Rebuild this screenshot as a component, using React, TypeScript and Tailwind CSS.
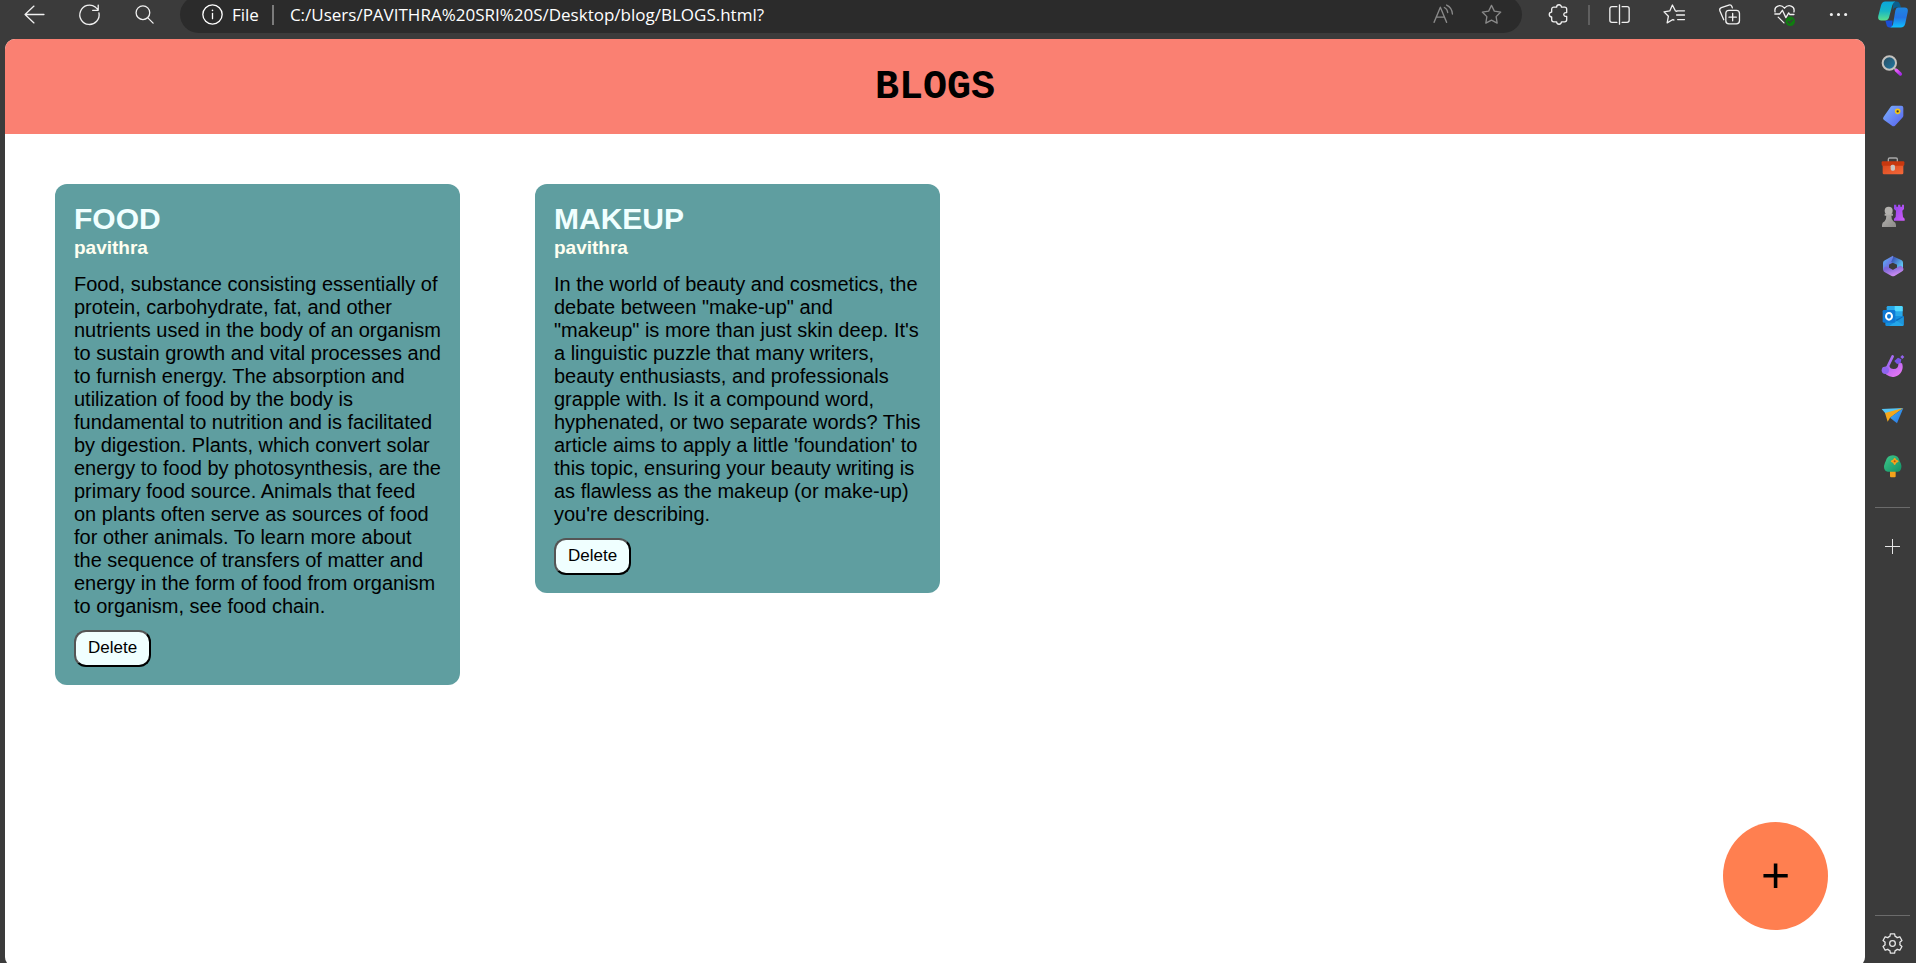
import type { ReactNode } from "react";

type Post = { title: string; author: string; body: string };

const posts: Post[] = [
  {
    title: "FOOD",
    author: "pavithra",
    body: "Food, substance consisting essentially of protein, carbohydrate, fat, and other nutrients used in the body of an organism to sustain growth and vital processes and to furnish energy. The absorption and utilization of food by the body is fundamental to nutrition and is facilitated by digestion. Plants, which convert solar energy to food by photosynthesis, are the primary food source. Animals that feed on plants often serve as sources of food for other animals. To learn more about the sequence of transfers of matter and energy in the form of food from organism to organism, see food chain.",
  },
  {
    title: "MAKEUP",
    author: "pavithra",
    body: "In the world of beauty and cosmetics, the debate between \"make-up\" and \"makeup\" is more than just skin deep. It's a linguistic puzzle that many writers, beauty enthusiasts, and professionals grapple with. Is it a compound word, hyphenated, or two separate words? This article aims to apply a little 'foundation' to this topic, ensuring your beauty writing is as flawless as the makeup (or make-up) you're describing.",
  },
];

// Thin outline icon on a 20-unit grid
function Line({ children }: { children: ReactNode }) {
  return (
    <svg
      viewBox="0 0 20 20"
      className="size-[21px] overflow-visible"
      fill="none"
      stroke="currentColor"
      strokeWidth="1.25"
      strokeLinecap="round"
      strokeLinejoin="round"
      aria-hidden="true"
    >
      {children}
    </svg>
  );
}

function ToolButton({ label, wide = "w-[55px]", children }: { label: string; wide?: string; children: ReactNode }) {
  return (
    <button type="button" aria-label={label} className={`${wide} flex h-7 shrink-0 items-center justify-center`}>
      {children}
    </button>
  );
}

const starPath =
  "M10 1.3 12.7 6.8 18.8 7.7 14.4 12 15.4 18.2 10 15.3 4.6 18.2 5.6 12 1.2 7.7 7.3 6.8Z";

function Toolbar() {
  return (
    <header className="flex h-[39px] shrink-0 items-center pb-[10px] pl-[7px] text-[#f0f0f0]">
      <ToolButton label="Back">
        <Line>
          <path d="M19 10H1M9.5 2 1 10l8.500 8" />
        </Line>
      </ToolButton>
      <ToolButton label="Refresh">
        <Line>
          <path d="M19 8.500A9.200 9.200 0 1 1 15.800 3.200L18.300 5.500M18.300 1v5h-5.300" />
        </Line>
      </ToolButton>
      <ToolButton label="Search">
        <Line>
          <circle cx="8.500" cy="8.300" r="6.500" />
          <path d="m13.200 13.200 5 5" />
        </Line>
      </ToolButton>
      <div className="ml-[8px] flex h-[37px] min-w-0 flex-1 items-center rounded-full bg-[#2b2b2b] pr-[7px] pl-[22px] font-['Open_Sans',sans-serif] text-[17px] leading-6 text-white">
        <Line>
          <circle cx="10" cy="10" r="9.200" />
          <path d="M10 9v5" />
          <path d="M10 6v.2" strokeWidth="1.500" />
        </Line>
        <span className="ml-[9px]">File</span>
        <span className="ml-[13px] h-5 w-[2px] bg-[#7b7b7b]" />
        <input
          aria-label="Address"
          defaultValue="C:/Users/PAVITHRA%20SRI%20S/Desktop/blog/BLOGS.html?"
          className="ml-[16px] min-w-0 flex-1 bg-transparent outline-none"
        />
        <div className="flex text-[#8a8a8a]">
          <ToolButton label="Read aloud" wide="w-12">
            <Line>
              <path d="M1 17.500 7 3l6 14.500M3.200 12.500h7.600M10.800 3.300c1.800.9 3 2.600 3.200 4.800M13 1c3.200 1.500 5.300 4.800 5.500 8.500" />
            </Line>
          </ToolButton>
          <ToolButton label="Add to favorites" wide="w-12">
            <Line>
              <path d={starPath} />
            </Line>
          </ToolButton>
        </div>
      </div>
      <div className="ml-[9px] flex items-center">
        <ToolButton label="Extensions">
          <Line>
            <path d="M5.500 3h2.700a2.300 2.300 0 0 1 4.600 0h3a2 2 0 0 1 2 2v3.200c-3.700-.6-3.700 4.200 0 3.600V15a2 2 0 0 1-2 2h-3a2.300 2.300 0 0 1-4.600 0H5.500a2 2 0 0 1-2-2v-2.700a2.300 2.300 0 0 1 0-4.600V5a2 2 0 0 1 2-2Z" />
          </Line>
        </ToolButton>
        <span className="mx-[2px] h-5 w-[2px] bg-[#5f5f5f]" />
        <ToolButton label="Split screen">
          <Line>
            <path d="M7.500 2.500H2.800a2 2 0 0 0-2 2v11a2 2 0 0 0 2 2h4.700M12.500 2.500h4.700a2 2 0 0 1 2 2v11a2 2 0 0 1-2 2h-4.700M10 .8v18.400" />
          </Line>
        </ToolButton>
        <ToolButton label="Favorites">
          <Line>
            <path d="M12.300 7 10.800 6.500 8 1 5.500 6.600 0 7.500 4.200 11.600 3 18l5.500-3.200 1 .5M12.500 6.500H19.500M12 10.500h7.500M13 14.800h6.500" />
          </Line>
        </ToolButton>
        <ToolButton label="Collections">
          <Line>
            <path d="M4.500 15 .9 6.700C.4 5.200.9 4 2.200 3.500L9.400 1c1.300-.4 2.400.1 2.900 1.400l.4 1.300" />
            <rect x="6.500" y="6" width="13" height="13" rx="3" />
            <path d="M13 9v7M9.500 12.500h7" />
          </Line>
        </ToolButton>
        <ToolButton label="Browser essentials">
          <Line>
            <path d="M1 7.500C-.2 1.500 6.500-.2 10 4c3.500-4.200 10.200-2.500 9 3.500M.8 9.500h4.700L8 6l3.300 7L14 8.500l1 1.500h4M4 12.500l5.500 5.500" />
            <circle cx="15.500" cy="16.500" r="4.500" fill="#107c10" stroke="none" />
            <path d="m13.500 16.600 1.300 1.400 2.700-2.800" stroke="#3b3b3b" />
          </Line>
        </ToolButton>
        <ToolButton label="More" wide="w-[53px]">
          <Line>
            <path d="M3.200 10h.01M10 10h.01M16.800 10h.01" strokeWidth="3" />
          </Line>
        </ToolButton>
      </div>
    </header>
  );
}

// Sidebar drawings share a 72-unit grid
const sideIcons: { label: string; art: ReactNode }[] = [
  {
    label: "Search",
    art: (
      <>
        <path d="m38 41 7 7" stroke="#9a9a9a" strokeWidth="6" />
        <path d="m46 49 12 11" stroke="url(#magenta)" strokeWidth="10" strokeLinecap="round" />
        <circle cx="25" cy="27" r="20" fill="url(#lens)" stroke="#c4c2bf" strokeWidth="6" />
      </>
    ),
  },
  {
    label: "Shopping",
    art: (
      <>
        <path d="M35 5h26q6 0 6 6v24q0 3-3 6L42 65q-5 4-9 0L8 47q-4-4 0-9L29 8q2-3 6-3Z" fill="url(#tag)" />
        <circle cx="50" cy="22" r="6" fill="#3b3b3b" stroke="#f5c518" strokeWidth="5" />
      </>
    ),
  },
  {
    label: "Tools",
    art: (
      <>
        <path d="M22 24v-8q0-4 4-4h19q4 0 4 4v8" fill="none" stroke="#a8a8a8" strokeWidth="4" />
        <rect x="5" y="30" width="62" height="31" rx="4" fill="url(#box)" />
        <rect x="2" y="22" width="68" height="13" rx="3" fill="#c8380f" />
        <rect x="29" y="32" width="13" height="18" rx="5" fill="#c9c5c2" />
      </>
    ),
  },
  {
    label: "Games",
    art: (
      <>
        <path d="M39 2h7v6h5V2h7v6h5V2h6v13l-5 5 2 19 5 5v6H39v-6l5-5 1-19-6-5Z" fill="url(#rook)" />
        <path d="M11 29h25v6h-5q0 12 6 17 8 3 8 11v6H3v-6q0-8 8-11 5-5 5-17h-5Z" fill="url(#pawn)" />
        <circle cx="23" cy="20" r="12" fill="#b3b1ae" />
      </>
    ),
  },
  {
    label: "Microsoft 365",
    art: (
      <g fill="none" strokeWidth="18" strokeLinejoin="round">
        <path d="M40 13 15 27v20" stroke="url(#violet)" />
        <path d="M34 16 57 26v22" stroke="url(#sky)" />
        <path d="M58 45 36 58 16 47" stroke="url(#indigo)" strokeLinecap="round" />
      </g>
    ),
  },
  {
    label: "Outlook",
    art: (
      <>
        <rect x="17" y="6" width="48" height="38" rx="4" fill="#28a8ea" />
        <path d="M41 6h20q4 0 4 4v12H41Z" fill="#50d9ff" />
        <path d="M13 36h55v26q0 4-4 4H17q-4 0-4-4Z" fill="#1490df" />
        <path d="M68 36v28L43 48Z" fill="#0a6cbd" />
        <path d="M24 66 68 38v24q0 4-4 4Z" fill="#32b8f0" opacity=".55" />
        <rect x="5" y="18" width="38" height="38" rx="4" fill="#0f78d4" />
        <ellipse cx="24" cy="37" rx="9" ry="10" fill="none" stroke="#fff" strokeWidth="6" />
      </>
    ),
  },
  {
    label: "Designer",
    art: (
      <>
        <path d="M5 40A30 30 0 1 0 63 28L52 26Q54 44 38 45 27 45 25 36Z" fill="url(#drop)" />
        <path d="M35 7 18 42" stroke="#a86cf4" strokeWidth="8" strokeLinecap="round" />
        <circle cx="13" cy="49" r="11" fill="#8f65ef" />
        <path d="m51 11 10 5-2 11-11 3-8-9Z" fill="#7754e8" />
        <path d="m64 3 6 6-6 6-6-6Z" fill="#9363ee" />
      </>
    ),
  },
  {
    label: "Drop",
    art: (
      <>
        <path d="M2 15 67 12 18 34Z" fill="#55c5f5" />
        <path d="M12 27 67 12 27 41l-7 12Z" fill="#f5a81c" />
        <path d="M67 12 48 58 27 41Z" fill="url(#plane)" />
      </>
    ),
  },
  {
    label: "Tree",
    art: (
      <>
        <path d="M27 48h17v19q0 3-3 3H30q-3 0-3-3Z" fill="#f2a21b" />
        <path d="M36 4q17 0 20 18 8 12 4 23-2 8-9 8H20q-7 0-10-8-3-9 4-23Q18 4 36 4Z" fill="url(#leaf)" />
        <path d="m41 14 3 5 6 3-6 3-3 5-3-5-6-3 6-3Z" fill="#f6a21a" stroke="#f6a21a" strokeWidth="5" strokeLinejoin="round" />
        <circle cx="41" cy="22" r="3" fill="#b15312" />
      </>
    ),
  },
];

function Gradient({ id, from, to }: { id: string; from: string; to: string }) {
  return (
    <linearGradient id={id} x1="0" y1="0" x2="1" y2="1">
      <stop stopColor={from} />
      <stop offset="1" stopColor={to} />
    </linearGradient>
  );
}

function Copilot() {
  return (
    <svg viewBox="0 0 90 80" className="h-[27px] w-[30px]" aria-hidden="true">
      <defs>
        <Gradient id="magenta" from="#e65cf5" to="#a82be8" />
        <Gradient id="lens" from="#2b4a5c" to="#1e7ba8" />
        <Gradient id="tag" from="#7db4fb" to="#5660ee" />
        <Gradient id="box" from="#d9481c" to="#f4693b" />
        <Gradient id="rook" from="#8f45ea" to="#d05cf8" />
        <Gradient id="pawn" from="#b5b3b0" to="#8c8a88" />
        <Gradient id="violet" from="#5fa0f0" to="#7a48cf" />
        <Gradient id="sky" from="#3b57b8" to="#63d0f8" />
        <Gradient id="indigo" from="#7c66d6" to="#c88af0" />
        <Gradient id="drop" from="#a05cf4" to="#f07cf2" />
        <Gradient id="plane" from="#3fb6f6" to="#2a6fe0" />
        <Gradient id="leaf" from="#3fc98a" to="#119065" />
        <linearGradient id="pilotLeft" x1="0" y1="0" x2="0" y2="1">
          <stop stopColor="#0aa7dc" />
          <stop offset=".5" stopColor="#16b5c6" />
          <stop offset="1" stopColor="#5ce08d" />
        </linearGradient>
        <linearGradient id="pilotRight" x1="0" y1="0" x2="0" y2="1">
          <stop stopColor="#1f86e0" />
          <stop offset=".5" stopColor="#2474e4" />
          <stop offset="1" stopColor="#0fc0ff" />
        </linearGradient>
      </defs>
      <path d="M46 1h11q7 0 9 8l3 10H54q-7 0-10 8Z" fill="#0a5f8e" />
      <path d="M22 58h22l-2 18-3 3h-5q-6 0-8-7Z" fill="#1a50d6" />
      <path d="M22 1h30q-6 2-9 11L33 49q-3 9-12 9H10Q-2 58 1 44L9 13Q12 1 22 1Z" fill="url(#pilotLeft)" />
      <path d="M60 19h20q12 0 9 14l-7 33q-3 13-14 13H37q6-2 8-10l7-41q2-9 8-9Z" fill="url(#pilotRight)" />
    </svg>
  );
}

function Sidebar() {
  return (
    <aside className="flex w-[51px] shrink-0 flex-col items-center pl-[4px] text-[#e6e6e6]">
      <button type="button" aria-label="Copilot" className="flex h-[41px] items-start pt-[1px]">
        <Copilot />
      </button>
      {sideIcons.map((icon) => (
        <button
          key={icon.label}
          type="button"
          aria-label={icon.label}
          className="flex h-[50px] w-full shrink-0 items-center justify-center"
        >
          <svg viewBox="0 0 72 72" className="size-6" aria-hidden="true">
            {icon.art}
          </svg>
        </button>
      ))}
      <hr className="mt-4 w-[35px] border-[#6b6b6b]" />
      <button type="button" aria-label="Customize" className="mt-[26px] flex h-6 items-center">
        <svg viewBox="0 0 15 15" className="size-[15px]" stroke="currentColor" aria-hidden="true">
          <path d="M7.500 0v15M0 7.500h15" />
        </svg>
      </button>
      <hr className="mt-auto w-[35px] border-[#6b6b6b]" />
      <button type="button" aria-label="Settings" className="flex h-[47px] items-start pt-[17px]">
        <Line>
          <path d="M8 .8h4l.5 2.500q1.200.3 2 1.200l2.500-.9 2 3.500-2 1.700q.4 1.200 0 2.400l2 1.700-2 3.500-2.500-.9q-.8.900-2 1.200l-.5 2.500H8l-.5-2.500q-1.200-.3-2-1.200l-2.500.9-2-3.500 2-1.700q-.4-1.200 0-2.400l-2-1.700 2-3.500 2.500.9q.8-.9 2-1.200Z" />
          <circle cx="10" cy="10" r="2.700" />
        </Line>
      </button>
    </aside>
  );
}

function Card({ post }: { post: Post }) {
  return (
    <article className="w-[405px] rounded-xl bg-[#5f9ea0] px-[19px] py-[18px]">
      <h2 className="text-[30px] leading-[34px] font-bold text-[#f0ffff]">{post.title}</h2>
      <h3 className="text-[19px] leading-6 font-bold text-[#fffff0]">{post.author}</h3>
      <p className="mt-[13px] text-[20px] leading-[23px]">{post.body}</p>
      <button
        type="button"
        className="mt-3 block rounded-xl border-2 border-t-[#555] border-r-black border-b-black border-l-[#555] bg-[#f0ffff] px-3 pt-[6px] pb-[8px] text-[17px] leading-[19px]"
      >
        Delete
      </button>
    </article>
  );
}

export default function App() {
  return (
    <div className="flex h-screen overflow-hidden bg-[#3b3b3b] font-['Liberation_Sans',Arial,sans-serif] text-black">
      <div className="flex min-w-0 flex-1 flex-col">
        <Toolbar />
        <main className="relative -mb-1 ml-[5px] min-h-0 flex-1 overflow-hidden rounded-[10px] bg-white">
          <div className="bg-[#fa8072] pt-[26px] pb-6">
            <h1 className="text-center font-['Liberation_Mono','Courier_New',monospace] text-[40px] leading-[45px] font-bold">
              BLOGS
            </h1>
          </div>
          <section className="flex flex-wrap items-start gap-[75px] p-[50px]">
            {posts.map((post) => (
              <Card key={post.title} post={post} />
            ))}
          </section>
          <button
            type="button"
            aria-label="Add blog"
            className="absolute right-[37px] bottom-[37px] flex h-[108px] w-[105px] items-center justify-center rounded-[50%] bg-[#ff7f50] pb-[2px] text-[50px] leading-none"
          >
            +
          </button>
        </main>
      </div>
      <Sidebar />
    </div>
  );
}
